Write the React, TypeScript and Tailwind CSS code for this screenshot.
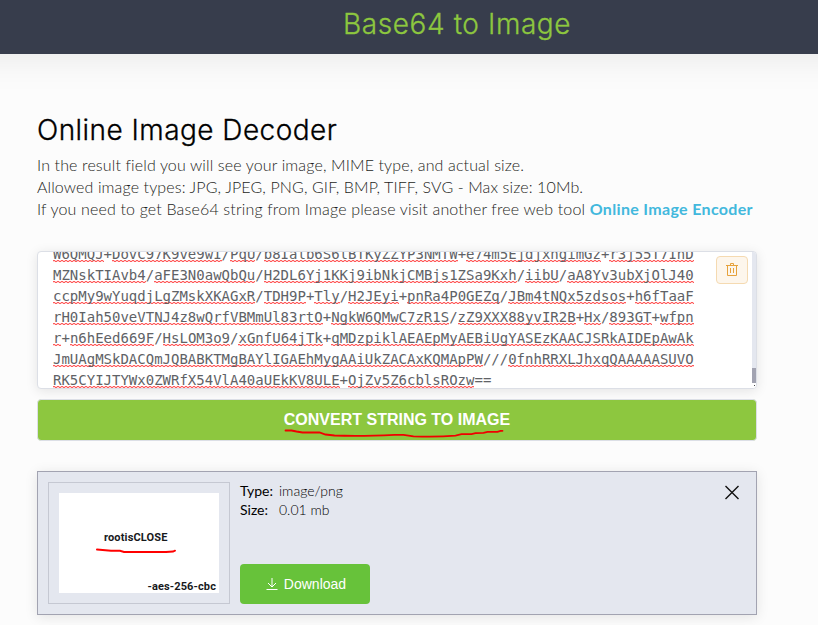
import React from "react";

const lines = [
  "W6QMQJ+DovC97K9ve9wI/PqU/b8Ialb6S6lBTKyZZYP3NMTW+e74m5EjdjxngimGz+r3j55T7InD",
  "MZNskTIAvb4/aFE3N0awQbQu/H2DL6Yj1KKj9ibNkjCMBjs1ZSa9Kxh/iibU/aA8Yv3ubXjOlJ40",
  "ccpMy9wYuqdjLgZMskXKAGxR/TDH9P+Tly/H2JEyi+pnRa4P0GEZq/JBm4tNQx5zdsos+h6fTaaF",
  "rH0Iah50veVTNJ4z8wQrfVBMmUl83rtO+NgkW6QMwC7zR1S/zZ9XXX88yvIR2B+Hx/893GT+wfpn",
  "r+n6hEed669F/HsLOM3o9/xGnfU64jTk+qMDzpiklAEAEpMyAEBiUgYASEzKAACJSRkAIDEpAwAk",
  "JmUAgMSkDACQmJQBABKTMgBAYlIGAEhMygAAiUkZACAxKQMApPW///0fnhRRXLJhxqQAAAAASUVO",
  "RK5CYIJTYWx0ZWRfX54VlA40aUEkKV8ULE+OjZv5Z6cblsROzw==",
];

function EncodedLine({ text }: { text: string }) {
  return (
    <div className="flex h-[21px] whitespace-pre">
      {text.split(/([+/=]+)/).map((part, i) =>
        i % 2 ? (
          <span key={i}>{part}</span>
        ) : (
          <span
            key={i}
            className="h-[21px] bg-[linear-gradient(90deg,#ff5a5a_50%,#ffd0d0_50%),linear-gradient(90deg,#ffd0d0_50%,#ff5a5a_50%)] bg-[length:4px_1px,4px_1px] bg-[position:0_16px,0_17px] bg-repeat-x"
          >
            {part}
          </span>
        )
      )}
    </div>
  );
}

export default function App() {
  return (
    <div className="h-[625px] w-[818px] overflow-hidden bg-[#fcfcfc]">
      <header className="-ml-[50px] h-[54px] w-[918px] bg-[#373d4c] pl-[393px] pt-[6px] shadow-[0_0_40px_rgba(0,0,0,0.1)]">
        <div className="whitespace-nowrap font-['Inter'] text-[28px] font-light leading-[36px] text-[#8dc73f] [-webkit-text-stroke:0.3px_#8dc73f]">
          <span className="tracking-[0.58px]">Base64 to Image</span>
        </div>
      </header>

      <main className="ml-[37px] w-[720px] pt-[58px]">
        <h1 className="whitespace-nowrap font-['Inter'] text-[28px] font-light leading-[36px] text-black [-webkit-text-stroke:0.3px_#000]">
          <span className="tracking-[0.45px]">Online Image Decoder</span>
        </h1>
        <div className="mt-[6px] whitespace-nowrap font-['Lato'] text-[16px] font-light leading-[22px] text-[#1c1e22]">
          <p><span className="tracking-[0.13px]">In the result field you will see your image, MIME type, and actual size.</span></p>
          <p><span className="tracking-[0.12px]">Allowed image types: JPG, JPEG, PNG, GIF, BMP, TIFF, SVG - Max size: 10Mb.</span></p>
          <p>
            <span className="tracking-[0.155px]">If you need to get Base64 string from Image please visit another free web tool </span>
            <a className="font-bold tracking-[0.33px] text-[#42b8dd]">Online Image Encoder</a>
          </p>
        </div>

        <div className="relative mt-[31px] flex h-[138px] w-[720px] overflow-hidden rounded-[4px] border border-[#dcdfe6] bg-white shadow-[0_2px_12px_rgba(0,0,0,0.1)]">
          <div className="-mt-[8px] flex-1 pl-[15px] font-['DejaVu_Sans_Mono'] text-[14px] leading-[21px] text-[#606266]">
            {lines.map((l) => (
              <EncodedLine key={l} text={l} />
            ))}
          </div>
          <div className="flex w-[4px] flex-col bg-[#e4e7ef]">
            <div className="mt-[116px] h-[15px] bg-[#a2a3b1]" />
            <div className="flex-1 bg-white pl-[2px] pt-[2px]">
              <div className="size-px bg-[#444]" />
            </div>
          </div>
          <button className="absolute right-[8px] top-[4px] flex h-[28px] w-[32px] items-center justify-center rounded-[4px] border border-[#f5dab1] bg-[#fdf6ec]">
            <svg viewBox="0 0 12 13" className="-mt-px h-[13px] w-[12px]" fill="none" stroke="#e6a23c">
              <path d="M0 2.5h12M4.500 2V.5h3V2M1.500 2.5v10h9v-10M4.500 5v5M7.500 5v5" />
            </svg>
          </button>
        </div>

        <button className="relative mt-[10px] flex h-[42px] w-[720px] items-center justify-center rounded-[4px] border border-[#dcdfe6] bg-[#8dc73f] font-['Liberation_Sans'] text-[16px] font-bold leading-[20px] text-white">
          <span className="pb-px">CONVERT STRING TO IMAGE</span>
          <svg className="absolute left-[245px] top-[27px] h-[12px] w-[224px]" viewBox="0 0 224 12" fill="none" stroke="#f00000" strokeWidth="1.8" strokeLinecap="round">
            <path d="M2.500 3.500h6l5 1 6 1h17l6 2 9 1q25 1 60-.6h9l10 1.400q24 .7 42-.6l6-1.500h10l4-1 8-.4 4-1h10l3-1h2" />
          </svg>
        </button>

        <section className="mt-[30px] flex h-[144px] w-[720px] border border-[#a2a3b1] bg-[#e4e7ef] p-[10px] shadow-[0_2px_12px_rgba(0,0,0,0.1)]">
          <div className="h-[122px] w-[182px] border border-[#c5c8d2] p-[10px]">
            <div className="flex h-[100px] w-[160px] flex-col bg-white font-['Roboto'] font-bold text-[#17191c]">
              <div className="pl-[45px] pt-[38px] text-[11px] leading-[14px]">
                <span className="tracking-[0.15px]">rootisCLOSE</span>
              </div>
              <svg className="ml-[35px] mt-[2px] h-[8px] w-[84px] shrink-0" viewBox="0 0 84 8" fill="none" stroke="#f00" strokeWidth="2" strokeLinecap="round">
                <path d="M3 2.500l14 1.300h9l4 1.200h42l7-.4 2-.9" />
              </svg>
              <div className="mt-[25px] pr-[3px] text-right text-[11px] leading-[14px]">
                <span className="tracking-[0.12px]">-aes-256-cbc</span>
              </div>
            </div>
          </div>
          <div className="-mt-px ml-[10px] w-[450px] font-['Lato'] text-[14px] leading-[19px] text-black">
            <div className="flex"><span className="w-[39px]">Type:</span><span className="font-light">image/png</span></div>
            <div className="flex"><span className="w-[39px]">Size:</span><span className="font-light">0.01 mb</span></div>
            <button className="mt-[45px] flex h-[40px] w-[130px] items-center justify-center gap-[6px] rounded-[4px] bg-[#67c23a] pl-[2px] font-['Liberation_Sans'] text-[14px] text-white">
              <svg viewBox="0 0 12 12" className="size-[12px]" fill="none" stroke="white">
                <path d="M6 0v8.500M2 5l4 4 4-4M.5 11.500h11" />
              </svg>
              <span>Download</span>
            </button>
          </div>
          <svg viewBox="0 0 16 16" className="ml-[34px] mt-[2px] size-[16px]" fill="none" stroke="#111" strokeWidth="1.4">
            <path d="M1.500 2l13 13M14.500 2l-13 13" />
          </svg>
        </section>
      </main>
    </div>
  );
}
